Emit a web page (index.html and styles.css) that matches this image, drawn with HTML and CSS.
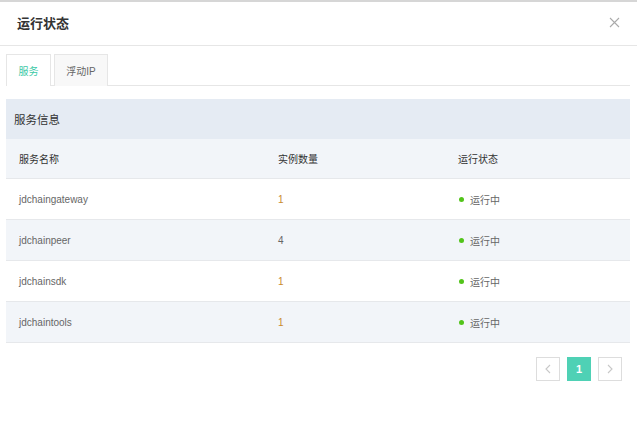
FILE: index.html
```html
<!DOCTYPE html>
<html lang="zh">
<head>
<meta charset="utf-8">
<link rel="stylesheet" href="styles.css">
</head>
<body>
<div class="modal">
  <div class="modal-header">
    <span class="title">运行状态</span>
    <svg class="close" width="11" height="11" viewBox="0 0 11 11"><path d="M1 1L10 10M10 1L1 10" stroke="#aaa" stroke-width="1.1" fill="none"/></svg>
  </div>
  <div class="modal-body">
    <div class="tabs">
      <div class="tab active">服务</div>
      <div class="tab">浮动IP</div>
    </div>
    <div class="section">
      <div class="section-title">服务信息</div>
      <div class="row head">
        <div class="c1">服务名称</div><div class="c2">实例数量</div><div class="c3">运行状态</div>
      </div>
      <div class="row">
        <div class="c1">jdchaingateway</div><div class="c2 num">1</div><div class="c3"><span class="dot"></span>运行中</div>
      </div>
      <div class="row alt">
        <div class="c1">jdchainpeer</div><div class="c2">4</div><div class="c3"><span class="dot"></span>运行中</div>
      </div>
      <div class="row">
        <div class="c1">jdchainsdk</div><div class="c2 num">1</div><div class="c3"><span class="dot"></span>运行中</div>
      </div>
      <div class="row alt">
        <div class="c1">jdchaintools</div><div class="c2 num">1</div><div class="c3"><span class="dot"></span>运行中</div>
      </div>
    </div>
    <div class="pager">
      <div class="pg"><svg width="8" height="10" viewBox="0 0 8 10"><path d="M6 1L2 5L6 9" stroke="#c8c8c8" stroke-width="1.1" fill="none"/></svg></div>
      <div class="pg current">1</div>
      <div class="pg"><svg width="8" height="10" viewBox="0 0 8 10"><path d="M2 1L6 5L2 9" stroke="#c8c8c8" stroke-width="1.1" fill="none"/></svg></div>
    </div>
  </div>
</div>
</body>
</html>
```

FILE: styles.css
```css
* { box-sizing: border-box; }
body {
  margin: 0;
  background: #fff;
  font-family: "Liberation Sans", "Noto Sans CJK SC", sans-serif;
  color: #333;
}
.modal {
  width: 637px;
  height: 441px;
  border-top: 2px solid #d6d6d6;
  background: #fff;
}
.modal-header {
  height: 44px;
  border-bottom: 1px solid #e6e6e6;
  display: flex;
  align-items: center;
  justify-content: space-between;
  padding: 0 17px 3px 17px;
}
.title {
  font-size: 13px;
  font-weight: bold;
  color: #333;
}
.modal-body {
  padding: 8px 7px 0 6px;
}
.tabs {
  display: flex;
  gap: 3px;
  border-bottom: 1px solid #e6e6e6;
  height: 32px;
}
.tab {
  height: 32px;
  border: 1px solid #e6e6e6;
  border-bottom: none;
  background: #f8f8f8;
  font-size: 10px;
  color: #666;
  display: flex;
  align-items: center;
  justify-content: center;
  width: 54px;
}
.tab.active {
  background: #fff;
  color: #3cc9a6;
  margin-bottom: -1px;
  width: 45px;
}
.section {
  margin-top: 13px;
}
.section-title {
  height: 40px;
  background: #e5ebf3;
  font-size: 11.5px;
  color: #333;
  display: flex;
  align-items: center;
  padding-left: 8px;
}
.row {
  display: flex;
  height: 41px;
  align-items: center;
  border-bottom: 1px solid #e6e8eb;
  font-size: 10px;
  color: #666;
}
.row.head {
  height: 40px;
  background: #f2f5f9;
  color: #333;
}
.row.alt { background: #f2f5f9; }
.c1 { width: 259px; padding-left: 13px; }
.c2 { width: 180px; padding-left: 13px; }
.c3 { flex: 1; padding-left: 13px; display: flex; align-items: center; }
.num { color: #c98a2e; }
.dot {
  width: 5px;
  height: 5px;
  border-radius: 50%;
  background: #52c41a;
  margin-left: 1px;
  margin-right: 6px;
}
.pager {
  display: flex;
  justify-content: flex-end;
  gap: 7px;
  margin-top: 14px;
  padding-right: 8px;
}
.pg {
  width: 24px;
  height: 24px;
  border: 1px solid #ddd;
  display: flex;
  align-items: center;
  justify-content: center;
  font-size: 11px;
  background: #fff;
}
.pg.current {
  background: #4fd1b5;
  border-color: #4fd1b5;
  color: #fff;
  font-weight: bold;
}
```
